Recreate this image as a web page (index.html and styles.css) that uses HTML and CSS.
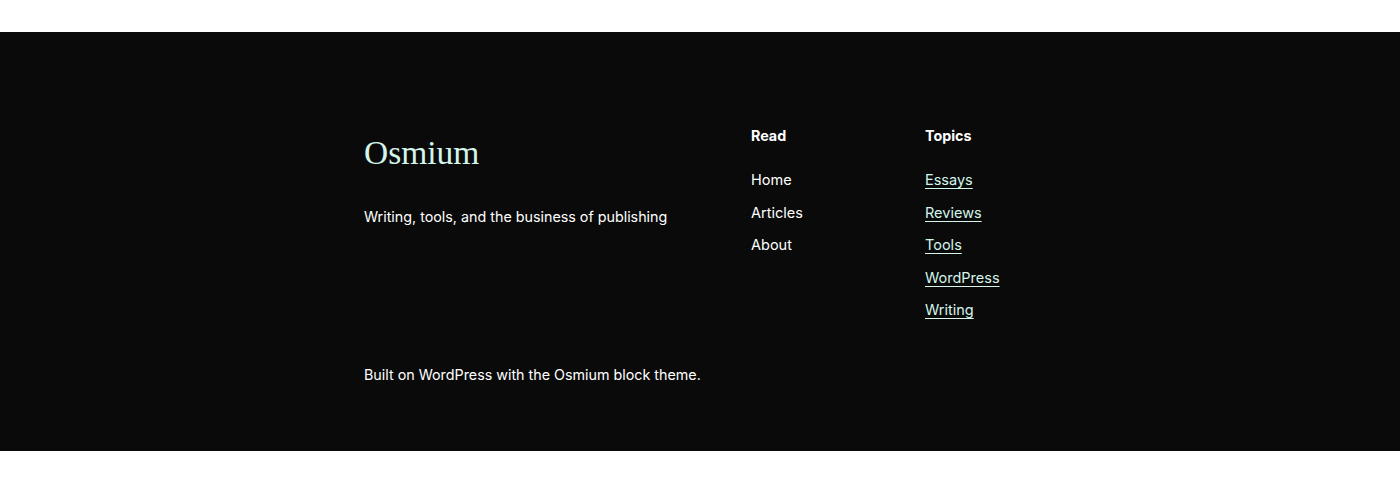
FILE: index.html
```html
<!DOCTYPE html>
<html lang="en">
<head>
<meta charset="utf-8">
<title>Osmium</title>
<link rel="stylesheet" href="styles.css">
</head>
<body>
<div class="top-space"></div>
<footer class="site-footer">
  <div class="footer-inner">
    <div class="footer-top">
      <div class="brand">
        <p class="site-title">Osmium</p>
        <p class="tagline">Writing, tools, and the business of publishing</p>
      </div>
      <nav class="nav-col nav-read">
        <h2 class="nav-heading">Read</h2>
        <ul class="nav-list">
          <li><a class="plain" href="#">Home</a></li>
          <li><a class="plain" href="#">Articles</a></li>
          <li><a class="plain" href="#">About</a></li>
        </ul>
      </nav>
      <nav class="nav-col nav-topics">
        <h2 class="nav-heading">Topics</h2>
        <ul class="nav-list">
          <li><a class="topic" href="#">Essays</a></li>
          <li><a class="topic" href="#">Reviews</a></li>
          <li><a class="topic" href="#">Tools</a></li>
          <li><a class="topic" href="#">WordPress</a></li>
          <li><a class="topic" href="#">Writing</a></li>
        </ul>
      </nav>
    </div>
    <p class="credit">Built on WordPress with the Osmium block theme.</p>
  </div>
</footer>
</body>
</html>
```

FILE: styles.css
```css
html, body {
  margin: 0;
  padding: 0;
  background: #ffffff;
}
body {
  font-family: Inter, "Liberation Sans", sans-serif;
  color: #ffffff;
}
.top-space {
  height: 32px;
}
.site-footer {
  background: #0a0a0a;
  height: 419px;
  box-sizing: border-box;
  padding-top: 94px;
}
.footer-inner {
  width: 672px;
  margin: 0 auto;
}
.footer-top {
  display: flex;
}
.brand {
  width: 387px;
  flex: none;
}
.site-title {
  margin: 0;
  font-family: "Liberation Serif", serif;
  font-size: 33.5px;
  line-height: 44px;
  color: #d4f5ea;
  margin-top: 5px;
}
.tagline {
  margin: 31px 0 0;
  font-size: 14.3px;
  line-height: 22px;
}
.nav-col {
  flex: none;
}
.nav-read {
  width: 174px;
}
.nav-heading {
  margin: 0;
  font-size: 14.3px;
  font-weight: 700;
  line-height: 20px;
}
.nav-list {
  list-style: none;
  margin: 23px 0 0;
  padding: 0;
  display: flex;
  flex-direction: column;
  gap: 10.5px;
}
.nav-list li {
  font-size: 14.5px;
  line-height: 22px;
}
.plain {
  color: #ffffff;
  text-decoration: none;
}
.topic {
  color: #d4f5ea;
  text-decoration: underline;
  text-underline-offset: 3px;
  text-decoration-thickness: 1px;
}
.credit {
  margin: 43px 0 0;
  font-size: 14.3px;
  line-height: 22px;
}
```
